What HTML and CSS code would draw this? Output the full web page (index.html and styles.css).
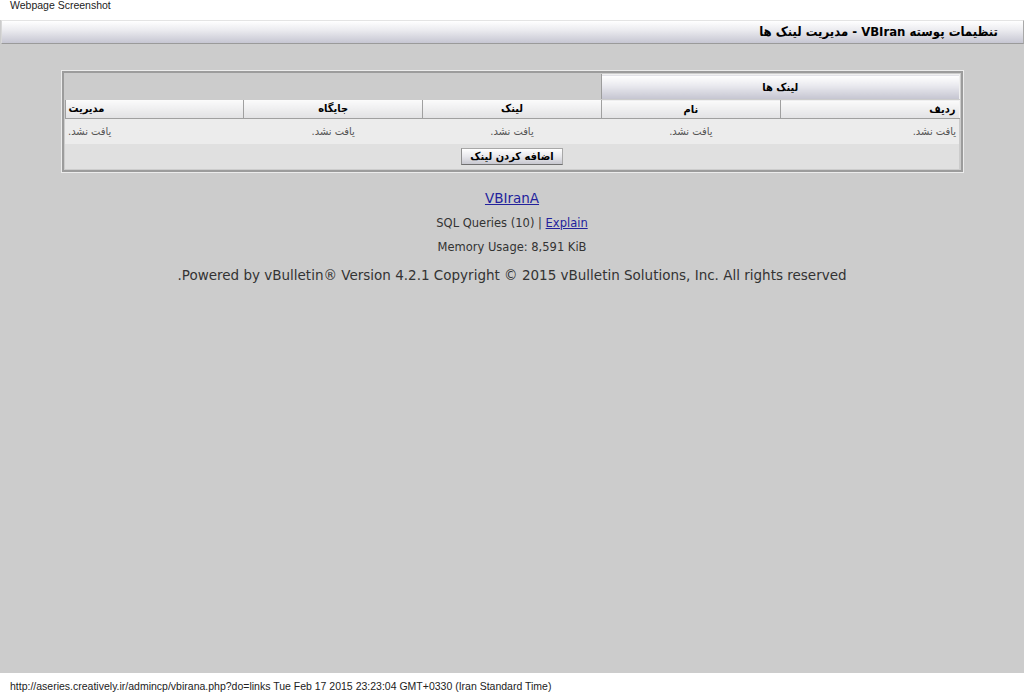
FILE: index.html
```html
<!DOCTYPE html>
<html lang="fa" dir="rtl">
<head>
<meta charset="utf-8">
<title>VBIran - مدیریت لینک ها</title>
<link rel="stylesheet" href="styles.css">
</head>
<body>
<div class="shotbar" dir="ltr">Webpage Screenshot</div>
<div class="page">
  <div class="pagetitle">تنظیمات پوسته VBIran - مدیریت لینک ها</div>
  <div class="tborder">
    <div class="tinner">
      <table class="grid">
        <colgroup>
          <col class="col"><col class="col"><col class="col"><col class="col"><col class="col">
        </colgroup>
        <tr class="row-title">
          <td class="tcat" colspan="2">لینک ها</td>
          <td class="empty" colspan="3"></td>
        </tr>
        <tr class="row-head">
          <th class="start">ردیف</th>
          <th>نام</th>
          <th>لینک</th>
          <th>جایگاه</th>
          <th class="end">مدیریت</th>
        </tr>
        <tr class="row-data">
          <td class="start">یافت نشد.</td>
          <td>یافت نشد.</td>
          <td>یافت نشد.</td>
          <td>یافت نشد.</td>
          <td class="end">یافت نشد.</td>
        </tr>
        <tr class="row-foot">
          <td colspan="5"><button class="btn" type="button">اضافه کردن لینک</button></td>
        </tr>
      </table>
    </div>
  </div>
  <div class="copyright">
    <div class="brand"><a href="#">VBIranA</a></div>
    <div class="small">SQL Queries (10) | <a href="#">Explain</a></div>
    <div class="small">Memory Usage: 8,591 KiB</div>
    <div class="powered">Powered by vBulletin® Version 4.2.1 Copyright © 2015 vBulletin Solutions, Inc. All rights reserved.</div>
  </div>
</div>
<div class="urlbar" dir="ltr">http://aseries.creatively.ir/admincp/vbirana.php?do=links Tue Feb 17 2015 23:23:04 GMT+0330 (Iran Standard Time)</div>
</body>
</html>
```
FILE: styles.css
```css
html, body {
  margin: 0;
  padding: 0;
  height: 693px;
}
body {
  display: flex;
  flex-direction: column;
  background: #fff;
  font-family: "DejaVu Sans Condensed", "DejaVu Sans", sans-serif;
  overflow: hidden;
}
.shotbar {
  height: 20px;
  box-sizing: border-box;
  padding: 0 0 0 10px;
  font-family: "Liberation Sans", Arial, sans-serif;
  font-size: 10.5px;
  line-height: 11px;
  color: #222;
  text-align: left;
}
.page {
  flex: 1;
  background: #cccccc;
  color: #333;
}
.pagetitle {
  height: 24px;
  box-sizing: border-box;
  margin-left: 1px;
  border-top: 1px solid #e4e4e4;
  border-bottom: 1px solid #9a9a9a;
  border-right: 1px solid #a8a8a8;
  border-left: 1px solid #d8d8d8;
  background: linear-gradient(#ffffff, #ececf0 40%, #c6c6d2);
  padding: 0 25px 0 0;
  font-weight: bold;
  font-size: 13px;
  line-height: 22px;
  color: #000;
  text-align: right;
}
.tborder {
  width: 903px;
  box-sizing: border-box;
  margin: 26px auto 0;
  border: 1px solid #ececec;
}
.tinner {
  border: 2px solid #9c9c9c;
  padding: 1px;
}
.grid {
  width: 895px;
  border-collapse: collapse;
  table-layout: fixed;
  font-size: 11px;
}
.col {
  width: 20%;
}
.grid td, .grid th {
  padding: 0 3px;
}
.row-title td {
  height: 25px;
  padding: 0;
}
.tcat {
  box-sizing: border-box;
  border: 1px solid #9c9c9c;
  border-top-color: #f0f0f0;
  border-right-color: #f0f0f0;
  border-bottom-color: #cccccc;
  background: linear-gradient(#ffffff, #ebebf0 40%, #c4c4d0);
  text-align: center;
  font-weight: bold;
  color: #000;
  font-size: 11px;
}
.empty {
  background: #cccccc;
}
.row-head th {
  height: 19px;
  box-sizing: border-box;
  background: linear-gradient(#fbfbfb, #e2e2e4);
  border-left: 1px solid #a0a0a0;
  border-right: 1px solid #f4f4f4;
  border-bottom: 1px solid #a0a0a0;
  font-weight: bold;
  color: #000;
  text-align: center;
}
.row-data td {
  height: 25px;
  background: #ececec;
  color: #555;
  text-align: center;
}
.grid .start { text-align: right; }
.grid .end { text-align: left; }
.row-foot td {
  height: 25px;
  background: #e0e0e0;
  text-align: center;
  padding: 0;
}
.btn {
  width: 102px;
  height: 17px;
  padding: 0;
  border: 1px solid #a8a8a8;
  border-bottom-color: #707070;
  border-left-color: #909090;
  background: linear-gradient(#ffffff, #e8e8ec 50%, #c8c8d0);
  font-family: "DejaVu Sans Condensed", "DejaVu Sans", sans-serif;
  font-weight: bold;
  font-size: 11px;
  line-height: 15px;
  color: #000;
  vertical-align: middle;
}
.copyright {
  margin-top: 17px;
  text-align: center;
  font-family: "DejaVu Sans", sans-serif;
}
.brand {
  font-size: 13.5px;
  line-height: 16px;
}
.copyright a {
  color: #22229c;
  text-decoration: underline;
}
.small {
  margin-top: 10px;
  font-size: 11.5px;
  line-height: 14px;
}
.powered {
  margin-top: 13px;
  font-size: 13.5px;
  line-height: 16px;
  color: #333;
}
.urlbar {
  height: 20px;
  box-sizing: border-box;
  padding: 8px 0 0 10px;
  font-family: "Liberation Sans", Arial, sans-serif;
  font-size: 10.5px;
  line-height: 11px;
  color: #222;
  text-align: left;
}
```
